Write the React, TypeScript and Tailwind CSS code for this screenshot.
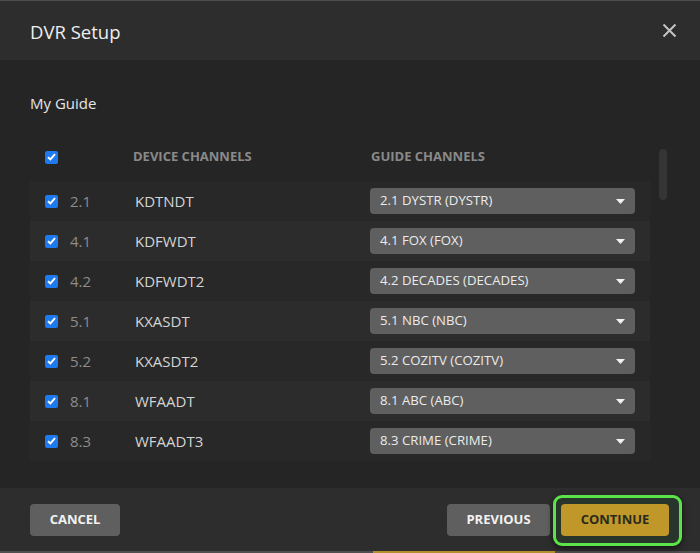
import React from "react";

type Row = { num: string; device: string; guide: string };

const rows: Row[] = [
    { num: "2.1", device: "KDTNDT", guide: "2.1 DYSTR (DYSTR)" },
    { num: "4.1", device: "KDFWDT", guide: "4.1 FOX (FOX)" },
    { num: "4.2", device: "KDFWDT2", guide: "4.2 DECADES (DECADES)" },
    { num: "5.1", device: "KXASDT", guide: "5.1 NBC (NBC)" },
    { num: "5.2", device: "KXASDT2", guide: "5.2 COZITV (COZITV)" },
    { num: "8.1", device: "WFAADT", guide: "8.1 ABC (ABC)" },
    { num: "8.3", device: "WFAADT3", guide: "8.3 CRIME (CRIME)" },
];

function Checkbox() {
    return (
        <div className="w-[13px] h-[13px] rounded-[2px] bg-[#1f7af0] flex items-center justify-center">
            <svg width="9" height="8" viewBox="0 0 9 8">
                <path d="M1 4.2 L3.4 6.4 L8 1.2" fill="none" stroke="#fff" strokeWidth="2" />
            </svg>
        </div>
    );
}

function GuideSelect({ value }: { value: string }) {
    return (
        <div className="w-[265px] h-[26px] rounded-[4px] bg-[#5f5f5f] flex items-center justify-between pl-[10px] pr-[10px]">
            <span className="text-[13.2px] text-[#ebebeb]">{value}</span>
            <svg width="9" height="5" viewBox="0 0 9 5">
                <path d="M0 0 H9 L4.5 5 Z" fill="#f2f2f2" />
            </svg>
        </div>
    );
}

export default function App() {
    return (
        <div className="w-[700px] h-[553px] flex flex-col bg-[#2d2d2d] font-['Open_Sans',sans-serif] overflow-hidden">
            <div className="h-px bg-[#4d4d4d]" />

            <div className="h-[59px] flex items-center justify-between pl-[30px] pr-[23px] bg-[#2d2d2d]">
                <h2 className="text-[18.5px] text-[#eeeeee] mt-[2px]">DVR Setup</h2>
                <svg width="15" height="15" viewBox="0 0 15 15">
                    <path d="M1.5 1.5 L13.5 13.5 M13.5 1.5 L1.5 13.5" stroke="#c4c4c4" strokeWidth="2" />
                </svg>
            </div>

            <div className="h-[428px] bg-[#252525] px-[30px] pt-[33px]">
                <div className="text-[15px] leading-[20px] text-[#e6e6e6]">My Guide</div>
                <div className="flex mt-[24px]">
                    <div className="w-[620px]">
                        <div className="h-[44px] flex items-center pb-[4px] text-[13px] font-bold text-[#8a8a8a]">
                            <div className="w-[40px] pl-[15px]">
                                <Checkbox />
                            </div>
                            <div className="w-[63px]" />
                            <div className="w-[238px]">DEVICE CHANNELS</div>
                            <div>GUIDE CHANNELS</div>
                        </div>
                        {rows.map((r, i) => (
                            <div
                                key={r.num}
                                className={
                                    "h-[40px] flex items-center text-[15px] " +
                                    (i % 2 === 0 ? "bg-[#282828]" : "bg-[#2c2c2c]")
                                }
                            >
                                <div className="w-[40px] pl-[15px]">
                                    <Checkbox />
                                </div>
                                <div className="w-[65px] text-[#8c8c8c]">{r.num}</div>
                                <div className="w-[235px] text-[#d4d4d4]">{r.device}</div>
                                <GuideSelect value={r.guide} />
                            </div>
                        ))}
                    </div>
                    <div className="ml-[9px] mt-[12px] w-[8px] h-[51px] rounded-full bg-[#353535]" />
                </div>
            </div>

            <div className="h-[63px] bg-[#2d2d2d] flex items-start justify-between pt-[16px] pl-[30px] pr-[31px]">
                <button className="w-[90px] h-[32px] rounded-[4px] bg-[#5f5f5f] text-[13px] font-bold text-[#f2f2f2]">
                    CANCEL
                </button>
                <div className="flex gap-[11px]">
                    <button className="w-[103px] h-[32px] rounded-[4px] bg-[#5f5f5f] text-[13px] font-bold text-[#f2f2f2]">
                        PREVIOUS
                    </button>
                    <div className="relative">
                        <div className="absolute -left-[8px] -right-[13px] -top-[9px] -bottom-[10px] rounded-[9px] border-[3px] border-[#5de34a] bg-[#27352a] shadow-[0_2px_6px_rgba(0,0,0,0.6)]" />
                        <button className="relative w-[108px] h-[32px] rounded-[4px] bg-[#c0982a] text-[13px] font-bold text-[#2a2a1c]">
                            CONTINUE
                        </button>
                    </div>
                </div>
            </div>

            <div className="h-[2px] flex bg-[#4f4f4f]">
                <div className="w-[373px]" />
                <div className="w-[182px] bg-[#b48f2e]" />
            </div>
        </div>
    );
}
